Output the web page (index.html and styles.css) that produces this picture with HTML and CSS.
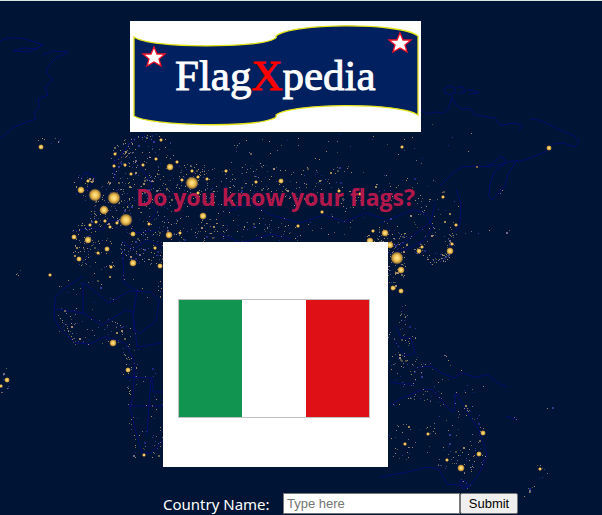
FILE: index.html
```
<!DOCTYPE html>
<html lang="en">
<head>
<meta charset="utf-8">
<title>FlagXpedia</title>
<link rel="stylesheet" href="styles.css">
</head>
<body>
<svg class="map" viewBox="0 0 602 515" preserveAspectRatio="xMinYMin slice" aria-hidden="true">
  <defs>
    <radialGradient id="glow">
      <stop offset="0" stop-color="#ffe995"/>
      <stop offset=".45" stop-color="#efc153"/>
      <stop offset=".75" stop-color="#a57c37"/>
      <stop offset="1" stop-color="#001536" stop-opacity="0"/>
    </radialGradient>
  </defs>
  <g class="borders">
    <path d="M0 40l8-3 12 0 12 3 11 4-14 7-16-1 10-3 15 1M43 54l10-4 15 1-12 6-7 7-3 7 7 8-8 7 3 8-10 4 1 8-5 6 2 6-12 4-12 5-8 8-7 4"/>
    <path d="M444 88l4-3 6 1 2 5-6 3-5-2zM457 86l6 0 2 5-6 1M467 89l6 0 6 3-9 1M420 108l6 5 9-2 8 1 6-5 3-11 4 8 6 4 8-1 5 7 13 2 7 1 5 7 8-1 8-1 7 3-5 5M530 118l9 1 9 4 12 6 14 6 5 5-4 6-12-4-10 1-8 8-20 8-17 2-13 4-8-2M440 185l14-14 8-5 16-1 12 1 8-9 5-1 3 6-12 9-4 12-1 12 3 4 13-14 3-12 9-14"/>
    <path d="M380 222l18-7 15-6 12 3 8 14-10 14-16 8-18 5M230 210l20-9 21 13 29 8 24-8 21 7 20-9 20 6M220 233l22 9 29-9 20 5"/>
    <path d="M83 275l-18 12-10 9-1 20 4 9 17 17 15 1 14-7 10 2 12 5 8 17 0 17-1 18-3 12 6 24 6 21 9 0 14-15M83 281v31l-27-4M83 281l26 21 20-12 22 1 8 9-3 20-16 12-6-3-1-18-7-2-24 15-19-12M133 315l4-25-13-8-1-29M134 319l3 27 24-4M125 376l27 1 1 14 10 0M129 405h34M151 377l-4 57"/>
    <path d="M390 404l14-8 20-8 9 1 14 17 7 5 2-20 10 18 13 20 8 24-8 20-10 13-9-2-13-1-8-15-11-2-21 5-27 5M415 367l15-2 12 7 12 5 8-5 12 4 14-2 10 8 9 4M396 325l5 12 10 0 4 15-10 3-10-15M390 381l12 2 12 0"/>
    <path d="M80 180l5-9 10 5-7 12-12 5M116 180l-3-16 8-11 12-14 10-5 13 8M75 230l16-3 12 2 6-10 16 1 12 12 20-3M122 240l11 9 14-10 16 7M140 165l12 18-5 17 10 10-10 14M456 188l5 15-1 20-5 8M400 245l18-14 13-11 4-18M506 415l12 4M460 480l6 0 2 6-5 2z"/>
  </g>
  <g id="towns" class="towns"></g>
  <g id="cities" fill="url(#glow)"></g>
</svg>
<main class="page">
  <svg class="logo" viewBox="0 0 291 111" role="img" aria-label="FlagXpedia">
    <rect width="291" height="111" fill="#fff"/>
    <path d="M4 16C20 28 130 27 144 18Q147 17 146 15C160 2 270 1 288 15V94C270 81 160 82 146 94Q147 97 142 98C120 107 20 105 4 95Z" fill="#00205f" stroke="#e3e316" stroke-width="1.3"/>
    <path class="star" d="M24 26l3 7h8l-6 5 2 7-7-4-7 4 2-7-6-5h8zM270 12l3 7h8l-6 5 2 7-7-4-7 4 2-7-6-5h8z"/>
    <text class="wordmark" x="45" y="69">Flag<tspan class="accent">X</tspan>pedia</text>
  </svg>
  <h1 class="question">Do you know your flags?</h1>
  <section class="quiz">
    <svg class="flag" viewBox="0 0 225 225" role="img" aria-label="Flag to identify">
      <path d="M0 0h225v225H0z" fill="#fff"/>
      <path d="M15 57h192v119H15z" fill="#c0c0c0"/>
      <path d="M16 58h190v117H16z" fill="#fff"/>
      <path d="M16 58h63v117H16z" fill="#129451"/>
      <path d="M143 58h63v117h-63z" fill="#df1117"/>
    </svg>
    <form class="answer">
      <label class="label" for="country">Country Name:</label>
      <input class="field" id="country" type="text" placeholder="Type here">
      <button class="submit" type="submit">Submit</button>
    </form>
  </section>
</main>
<script src="map.js"></script>
</body>
</html>
```

FILE: styles.css
```
* {
  box-sizing: border-box;
}

body {
  position: relative;
  margin: 0;
  min-height: 100vh;
  background: #001536;
  border-top: 1px solid #d5e8e0;
  color: #fff;
  font-family: "Noto Sans", sans-serif;
  overflow: hidden;
}

.map {
  position: absolute;
  top: 0;
  left: 0;
  width: 100%;
  height: 100vh;
}

.borders {
  fill: none;
  stroke: #050b78;
  stroke-width: 1;
  stroke-linejoin: round;
  opacity: .85;
}

.towns {
  opacity: .75;
}

.page {
  position: relative;
  display: flex;
  flex-direction: column;
  align-items: center;
  padding: 20px 51px 0 0;
}

.logo {
  width: 291px;
  height: 111px;
}

.star {
  fill: #fff;
  stroke: #f01028;
  stroke-width: 1.3;
}

.wordmark {
  fill: #fff;
  stroke: #fff;
  stroke-width: .9;
  font-family: "Liberation Serif", serif;
  font-size: 43px;
}

.accent {
  fill: #f00;
  stroke: #f00;
}

.question {
  margin: 48px 0 28px;
  color: #b3184c;
  font-family: "Open Sans", sans-serif;
  font-size: 23px;
  line-height: 34px;
  white-space: nowrap;
}

.quiz {
  width: 225px;
}

.flag {
  display: block;
  width: 225px;
  height: 225px;
}

.answer {
  display: flex;
  align-items: center;
  margin-top: 26px;
  width: max-content;
}

.label {
  width: 120px;
  font-size: 15px;
  line-height: 20px;
}

.field,
.submit {
  height: 21px;
  border: 1px solid #767676;
  font-family: "Liberation Sans", sans-serif;
  font-size: 13px;
}

.field {
  width: 177px;
  padding: 1px 3px;
  background: #fff;
  color: #000;
}

.field::placeholder {
  color: #757575;
}

.submit {
  width: 58px;
  padding: 0;
  background: #efefef;
  border-radius: 2px;
  color: #000;
}
```

FILE: map.js
```
// City lights: x, y, radius.
const cities = [
  [41,146,3],[115,153,2],[114,165,2],[125,164,2],[88,180,2],[81,189,4],[95,194,7],[114,197,7],
  [104,209,5],[126,219,7],[131,173,2],[74,236,3],[88,239,4],[107,248,3],[133,233,3],[79,258,3],
  [90,224,2],[96,221,2],[105,220,2],[110,226,2],[117,222,2],[98,252,2],[111,266,2],[133,262,4],
  [50,274,2],[113,342,4],[128,369,3],[7,379,3],[1,385,2],[144,454,2],[160,265,3],[170,166,4],
  [192,182,7],[177,161,2],[156,158,2],[161,139,2],[143,164,2],[182,179,2],[198,176,2],[207,178,2],
  [192,170,2],[226,170,2],[281,180,3],[339,190,2],[203,215,4],[149,223,2],[169,234,4],[180,232,2],
  [155,247,2],[370,240,4],[385,232,4],[373,230,2],[390,244,4],[402,146,2],[360,193,2],[322,211,2],
  [298,225,2],[198,192,2],[397,257,7],[401,269,4],[419,250,3],[422,246,2],[450,250,4],[452,243,2],
  [549,147,3],[477,166,1],[443,196,2],[456,224,2],[393,287,3],[401,290,3],[461,467,4],[483,432,3],
  [479,453,3],[540,468,2],[428,433,2],[405,443,2],[447,459,2],[256,181,2]
];

// Areas of small towns: centre x, y, half width, half height, count.
const areas = [
  [50,140,14,4,10],[84,184,12,12,28],[123,165,13,30,50],[150,155,26,25,58],[108,206,24,22,95],
  [145,205,32,32,140],[180,185,38,25,120],[225,183,45,22,85],[280,183,50,24,85],[340,188,60,24,75],
  [100,250,28,20,60],[84,235,13,16,45],[145,248,25,15,70],[195,230,35,16,75],[245,222,45,22,45],
  [300,225,60,15,40],[388,238,24,11,85],[395,262,10,26,75],[420,249,6,8,22],[439,256,13,5,35],
  [450,241,5,10,22],[405,205,55,30,60],[430,225,26,18,25],[100,295,48,25,30],[95,330,40,13,60],
  [130,360,10,20,28],[145,405,20,50,30],[154,445,12,12,20],[4,380,6,14,14],[407,330,9,16,22],
  [395,350,10,22,18],[405,362,17,12,25],[435,365,28,12,18],[455,385,32,8,12],[400,380,20,5,12],
  [400,440,15,20,28],[450,428,33,36,40],[452,457,18,14,22],[428,395,18,8,12],[478,450,10,28,18],
  [466,480,5,10,8],[320,145,95,14,28],[440,145,40,24,12],[483,231,30,5,7],[160,260,5,40,24],
  [62,316,14,10,10],[20,272,8,3,4]
];

// Towns strung along coasts: start x, y, end x, y, count.
const coasts = [
  [108,184,133,138,28],[133,138,160,133,14],[54,312,76,342,14],[125,350,135,460,18],
  [390,405,427,390,12],[460,398,482,430,14],[482,430,470,470,12],[535,460,548,473,7],
  [546,470,523,497,10],[403,303,401,320,9],[452,250,427,264,20],[500,196,501,188,3],
  [545,408,552,404,2],[514,415,518,419,2]
];

const NS = "http://www.w3.org/2000/svg";
const shades = ["#d0b064", "#8f805d", "#d8b090", "#9a88a8", "#4544b0", "#66634f", "#2a2c98"];
let seed = 71;
const random = () => (seed = (seed * 16807) % 2147483647) / 2147483647;

const town = (x, y) => {
  const dot = document.createElementNS(NS, "rect");
  const bright = random() > 0.93;
  dot.setAttribute("x", Math.round(x));
  dot.setAttribute("y", Math.round(y));
  dot.setAttribute("width", bright ? 2 : 1);
  dot.setAttribute("height", bright ? 2 : 1);
  dot.setAttribute("fill", shades[Math.floor(random() * shades.length)]);
  document.getElementById("towns").append(dot);
};

for (const [cx, cy, rx, ry, count] of areas) {
  for (let i = 0; i < count; i++) {
    const angle = random() * Math.PI * 2;
    const reach = Math.sqrt(random());
    town(cx + rx * reach * Math.cos(angle), cy + ry * reach * Math.sin(angle));
  }
}

for (const [x1, y1, x2, y2, count] of coasts) {
  for (let i = 0; i < count; i++) {
    const t = random();
    town(x1 + (x2 - x1) * t + random() * 4 - 2, y1 + (y2 - y1) * t + random() * 4 - 2);
  }
}

for (const [x, y, r] of cities) {
  const light = document.createElementNS(NS, "circle");
  light.setAttribute("cx", x);
  light.setAttribute("cy", y);
  light.setAttribute("r", r);
  document.getElementById("cities").append(light);
}
```
